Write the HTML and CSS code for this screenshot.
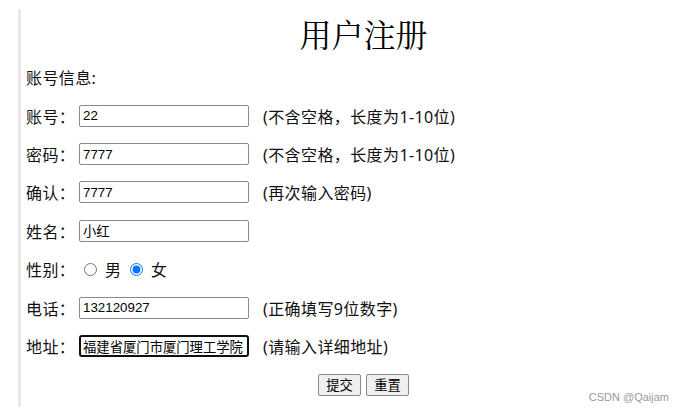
FILE: index.html
```html
<!DOCTYPE html>
<html lang="zh-CN">
<head>
<meta charset="utf-8">
<title>用户注册</title>
<link rel="stylesheet" href="styles.css">
</head>
<body>
<div class="page">
  <h1 class="title">用户注册</h1>
  <form class="form">
    <div class="row"><span class="label">账号信息:</span></div>
    <div class="row">
      <span class="label">账号：</span>
      <input class="field" type="text" value="22">
      <span class="hint">(不含空格，长度为1-10位)</span>
    </div>
    <div class="row">
      <span class="label">密码：</span>
      <input class="field" type="text" value="7777">
      <span class="hint">(不含空格，长度为1-10位)</span>
    </div>
    <div class="row">
      <span class="label">确认：</span>
      <input class="field" type="text" value="7777">
      <span class="hint">(再次输入密码)</span>
    </div>
    <div class="row">
      <span class="label">姓名：</span>
      <input class="field" type="text" value="小红">
    </div>
    <div class="row">
      <span class="label">性别：</span>
      <input class="radio radio-first" type="radio" name="sex">
      <span class="opt">男</span>
      <input class="radio" type="radio" name="sex" checked>
      <span class="opt">女</span>
    </div>
    <div class="row">
      <span class="label">电话：</span>
      <input class="field" type="text" value="132120927">
      <span class="hint">(正确填写9位数字)</span>
    </div>
    <div class="row">
      <span class="label">地址：</span>
      <input class="field focused" type="text" value="福建省厦门市厦门理工学院">
      <span class="hint">(请输入详细地址)</span>
    </div>
    <div class="row actions">
      <button class="btn" type="button">提交</button>
      <button class="btn" type="button">重置</button>
    </div>
  </form>
</div>
<div class="watermark">CSDN @Qaijam</div>
</body>
</html>
```
FILE: styles.css
```css
html, body {
  margin: 0;
  padding: 0;
  overflow: hidden;
  background: #fff;
}
body {
  width: 685px;
  height: 415px;
  position: relative;
  font-family: "Noto Sans", "Noto Sans CJK SC", sans-serif;
  color: #111;
}
.page {
  margin: 9px 0 0 18px;
  border-left: 3px solid #e8e8e8;
  padding-left: 5px;
  width: 675px;
  height: 398px;
}
.title {
  margin: 0;
  height: 49px;
  box-sizing: border-box;
  padding-top: 3px;
  line-height: 42px;
  font-family: "Noto Serif CJK SC", "Noto Sans CJK SC", serif;
  font-weight: normal;
  font-size: 32px;
  text-align: center;
  color: #000;
}
.form {
  display: flex;
  flex-direction: column;
}
.row {
  height: 38.43px;
  display: flex;
  align-items: center;
  font-size: 16px;
}
.label {
  width: 48px;
  white-space: nowrap;
  letter-spacing: 0.4px;
}
.field {
  margin: 0 0 0 5px;
  width: 170px;
  height: 22px;
  box-sizing: border-box;
  border: 1px solid #8a8a8a;
  border-radius: 2px;
  padding: 1px 3px;
  font-family: "Liberation Sans", "Noto Sans CJK SC", sans-serif;
  font-size: 13.33px;
  color: #000;
  background: #fff;
  outline: none;
}
.field.focused {
  border: 2px solid #101010;
  border-radius: 3px;
  padding: 0 2px;
}
.hint {
  margin-left: 14px;
  white-space: nowrap;
  letter-spacing: 0.4px;
}
.radio {
  margin: 0 0 0 9px;
  width: 13px;
  height: 13px;
}
.radio-first {
  margin-left: 10px;
}
.opt {
  margin-left: 8px;
}
.actions {
  justify-content: center;
  gap: 5px;
}
.btn {
  width: 43px;
  height: 22px;
  box-sizing: border-box;
  padding: 0;
  border: 1px solid #8a8a8a;
  border-radius: 2px;
  background: #efefef;
  font-family: "Noto Sans CJK SC", sans-serif;
  font-size: 13.33px;
  color: #000;
}
.watermark {
  position: absolute;
  right: 16px;
  top: 391px;
  font-family: "Liberation Sans", sans-serif;
  font-size: 11px;
  color: #9a9a9a;
}
```
